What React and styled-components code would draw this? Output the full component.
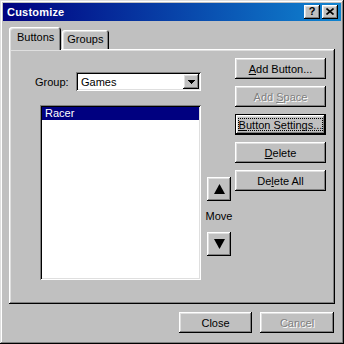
import React from "react";
import styled, { createGlobalStyle } from "styled-components";

const GlobalStyle = createGlobalStyle`
  html, body {
    margin: 0;
    padding: 0;
    background: #c0c0c0;
  }
  body {
    font-family: "Liberation Sans", Arial, sans-serif;
    font-size: 11px;
    color: #000;
  }
`;

const raised = `
  box-shadow: inset -1px -1px #000, inset 1px 1px #fff,
    inset -2px -2px #808080, inset 2px 2px #dfdfdf;
`;

const sunken = `
  box-shadow: inset 1px 1px #808080, inset -1px -1px #fff,
    inset 2px 2px #000, inset -2px -2px #dfdfdf;
`;

const Button = ({ children, focused, disabled, width }) => (
  <PushButton focused={focused} disabled={disabled} width={width}>
    {focused ? (
      <FocusRing>
        <Caption>{children}</Caption>
      </FocusRing>
    ) : (
      <Caption>{children}</Caption>
    )}
  </PushButton>
);

const App = () => {
  return (
    <>
      <GlobalStyle />
      <Window>
        <TitleBar>
          <Title>Customize</Title>
          <TitleButtons>
            <TitleButton>
              <HelpGlyph>?</HelpGlyph>
            </TitleButton>
            <TitleButton>
              <svg width="8" height="7" viewBox="0 0 8 7">
                <path d="M0.5 0.5 L7.5 6.5 M7.5 0.5 L0.5 6.5" stroke="#000" strokeWidth="1.6" />
              </svg>
            </TitleButton>
          </TitleButtons>
        </TitleBar>

        <Body>
          <TabRow>
            <Tab active>Buttons</Tab>
            <Tab>Groups</Tab>
          </TabRow>

          <Panel>
            <LeftColumn>
              <GroupRow>
                <Label>Group:</Label>
                <Combo>
                  <ComboText>Games</ComboText>
                  <ComboButton>
                    <svg width="7" height="4" viewBox="0 0 7 4" shapeRendering="crispEdges">
                      <polygon points="0,0 7,0 3.5,4" fill="#000" />
                    </svg>
                  </ComboButton>
                </Combo>
              </GroupRow>
              <ListBox>
                <ListItem selected>Racer</ListItem>
              </ListBox>
            </LeftColumn>

            <MoveColumn>
              <ArrowButton>
                <svg width="11" height="10" viewBox="0 0 11 10">
                  <polygon points="5.5,0 11,10 0,10" fill="#000" />
                </svg>
              </ArrowButton>
              <MoveLabel>Move</MoveLabel>
              <ArrowButton>
                <svg width="11" height="10" viewBox="0 0 11 10">
                  <polygon points="0,0 11,0 5.5,10" fill="#000" />
                </svg>
              </ArrowButton>
            </MoveColumn>

            <ButtonColumn>
              <Button>
                <u>A</u>dd Button...
              </Button>
              <Button disabled>
                Add <u>S</u>pace
              </Button>
              <Button focused>
                <u>B</u>utton Settings...
              </Button>
              <Button>
                <u>D</u>elete
              </Button>
              <Button>
                De<u>l</u>ete All
              </Button>
            </ButtonColumn>
          </Panel>

          <BottomRow>
            <Button width="73px">Close</Button>
            <Button width="74px" disabled>
              Cancel
            </Button>
          </BottomRow>
        </Body>
      </Window>
    </>
  );
};

const Window = styled.div`
  width: 344px;
  height: 344px;
  box-sizing: border-box;
  padding: 3px;
  background: #c0c0c0;
  box-shadow: inset -1px -1px #000, inset 1px 1px #dfdfdf,
    inset -2px -2px #808080, inset 2px 2px #fff;
  display: flex;
  flex-direction: column;
`;

const TitleBar = styled.div`
  height: 18px;
  flex-shrink: 0;
  display: flex;
  align-items: center;
  justify-content: space-between;
  padding: 0 3px 0 4px;
  background: linear-gradient(to right, #000080, #1084d0);
`;

const Title = styled.span`
  color: #fff;
  font-weight: bold;
  font-size: 11px;
  letter-spacing: 0.2px;
`;

const TitleButtons = styled.div`
  display: flex;
  gap: 2px;
`;

const TitleButton = styled.div`
  width: 16px;
  height: 14px;
  background: #c0c0c0;
  ${raised}
  display: flex;
  align-items: center;
  justify-content: center;
  padding-bottom: 1px;
  box-sizing: border-box;
`;

const HelpGlyph = styled.span`
  font-weight: bold;
  font-size: 11px;
  line-height: 11px;
`;

const Body = styled.div`
  flex: 1;
  display: flex;
  flex-direction: column;
  padding: 6px 6px 8px 6px;
`;

const TabRow = styled.div`
  height: 22px;
  display: flex;
  align-items: flex-end;
`;

const Tab = styled.div`
  position: relative;
  z-index: ${(p) => (p.active ? 1 : 0)};
  height: ${(p) => (p.active ? "23px" : "19px")};
  margin-bottom: ${(p) => (p.active ? "-1px" : "0")};
  padding: ${(p) => (p.active ? "4px 7px 0 8px" : "3px 6px 0 5px")};
  margin-left: ${(p) => (p.active ? "0" : "1px")};
  box-sizing: border-box;
  background: #c0c0c0;
  border-radius: 3px 3px 0 0;
  box-shadow: inset 1px 1px #fff, inset -1px 0 #000, inset -2px 0 #808080,
    inset 2px 2px #dfdfdf;
  line-height: 13px;
`;

const Panel = styled.div`
  width: 326px;
  height: 255px;
  box-sizing: border-box;
  background: #c0c0c0;
  ${raised}
  display: flex;
  align-items: flex-start;
  padding: 9px 0 0 26px;
`;

const LeftColumn = styled.div`
  width: 166px;
  margin-top: 14px;
  display: flex;
  flex-direction: column;
`;

const GroupRow = styled.div`
  display: flex;
  align-items: center;
  height: 19px;
`;

const Label = styled.span`
  flex: 1;
`;

const Combo = styled.div`
  width: 125px;
  height: 19px;
  box-sizing: border-box;
  padding: 2px;
  background: #fff;
  ${sunken}
  display: flex;
  align-items: center;
`;

const ComboText = styled.span`
  flex: 1;
  padding-left: 3px;
`;

const ComboButton = styled.div`
  width: 16px;
  height: 15px;
  box-sizing: border-box;
  background: #c0c0c0;
  ${raised}
  display: flex;
  align-items: center;
  justify-content: center;
`;

const ListBox = styled.div`
  margin: 14px 0 0 5px;
  width: 161px;
  height: 175px;
  box-sizing: border-box;
  padding: 2px;
  background: #fff;
  ${sunken}
`;

const ListItem = styled.div`
  height: 13px;
  line-height: 13px;
  padding-left: 3px;
  background: ${(p) => (p.selected ? "#000080" : "transparent")};
  color: ${(p) => (p.selected ? "#fff" : "#000")};
`;

const MoveColumn = styled.div`
  width: 24px;
  margin: 119px 0 0 6px;
  display: flex;
  flex-direction: column;
  align-items: center;
`;

const ArrowButton = styled.div`
  width: 24px;
  height: 24px;
  box-sizing: border-box;
  background: #c0c0c0;
  ${raised}
  display: flex;
  align-items: center;
  justify-content: center;
`;

const MoveLabel = styled.div`
  line-height: 13px;
  margin: 9px 0 9px;
`;

const ButtonColumn = styled.div`
  width: 91px;
  margin-left: 4px;
  display: flex;
  flex-direction: column;
  gap: 7px;
`;

const PushButton = styled.div`
  width: ${(p) => p.width || "100%"};
  height: 21px;
  box-sizing: border-box;
  background: #c0c0c0;
  display: flex;
  align-items: center;
  justify-content: center;
  padding: ${(p) => (p.focused ? "4px" : "0")};
  color: ${(p) => (p.disabled ? "#808080" : "#000")};
  text-shadow: ${(p) => (p.disabled ? "1px 1px #fff" : "none")};
  box-shadow: ${(p) =>
    p.focused
      ? "inset 0 0 0 1px #000, inset -2px -2px #000, inset 2px 2px #fff, inset -3px -3px #808080, inset 3px 3px #dfdfdf"
      : "inset -1px -1px #000, inset 1px 1px #fff, inset -2px -2px #808080, inset 2px 2px #dfdfdf"};
`;

const Caption = styled.span`
  white-space: nowrap;

  u {
    text-decoration: underline;
    text-underline-offset: 1px;
  }
`;

const FocusRing = styled.span`
  flex: 1;
  align-self: stretch;
  display: flex;
  align-items: center;
  justify-content: center;
  border: 1px dotted #000;
`;

const BottomRow = styled.div`
  display: flex;
  justify-content: flex-end;
  gap: 8px;
  margin-top: 8px;
  padding-right: 1px;
`;

export default App;
